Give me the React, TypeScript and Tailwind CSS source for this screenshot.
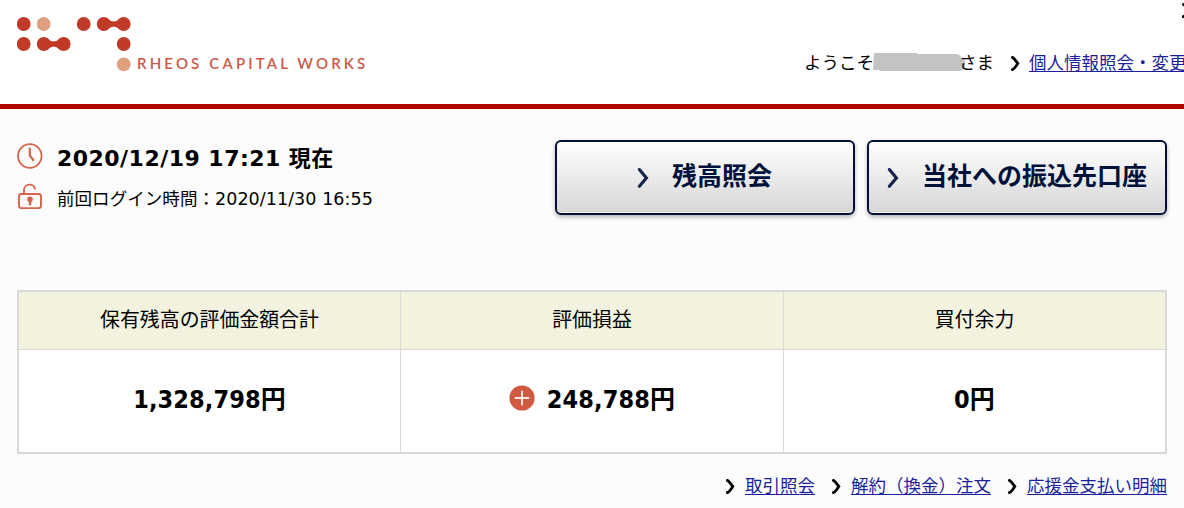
import type { ReactNode } from "react";

type IconProps = {
  className?: string;
};

const summary = [
  { label: "保有残高の評価金額合計", value: "1,328,798", positive: false },
  { label: "評価損益", value: "248,788", positive: true },
  { label: "買付余力", value: "0", positive: false },
];

const footerLinks = ["取引照会", "解約（換金）注文", "応援金支払い明細"];

function Chevron({ className = "" }: IconProps) {
  return (
    <svg
      viewBox="0 0 9 16"
      className={`h-4 w-[9px] shrink-0 ${className}`}
      fill="none"
      stroke="currentColor"
      strokeWidth="2.9"
      strokeLinecap="round"
    >
      <path d="M1.4 2.4Q2.7 2.9 6.8 8.4Q3.8 13.6 1.4 14.6" />
    </svg>
  );
}

function Logo() {
  return (
    <div className="flex items-end">
      <svg viewBox="0 0 115 56" className="h-14 w-[115px] shrink-0">
        <g fill="#c13927">
          <circle cx="6.7" cy="7" r="6.9" />
          <circle cx="66.7" cy="7" r="6.9" />
          <circle cx="86.7" cy="7" r="6.9" />
          <circle cx="106.7" cy="7" r="6.9" />
          <path d="M90 1 Q96.7 8 103.4 1 V13 Q96.7 6 90 13Z" />
          <circle cx="6.7" cy="27" r="6.9" />
          <circle cx="26.7" cy="27" r="6.9" />
          <circle cx="46.7" cy="27" r="6.9" />
          <path d="M30 21 Q36.7 28 43.4 21 V33 Q36.7 26 30 33Z" />
          <circle cx="106.7" cy="27" r="6.9" />
        </g>
        <g fill="#dfa080">
          <circle cx="26.7" cy="7" r="6.9" />
          <circle cx="106.7" cy="47.3" r="6.9" />
        </g>
      </svg>
      <span className="ml-[5px] pb-px font-['Lato'] text-[15px] leading-[18px] font-semibold tracking-[3.15px] whitespace-nowrap text-[#cb5848]">
        RHEOS CAPITAL WORKS
      </span>
    </div>
  );
}

function ClockIcon() {
  return (
    <svg
      viewBox="0 0 26 26"
      className="mb-0.5 h-[26px] w-[26px] shrink-0"
      fill="none"
      stroke="#d6644b"
    >
      <circle cx="12.8" cy="13" r="11.8" strokeWidth="1.8" />
      <path
        d="M12.8 5.5V12.8Q14.5 14.5 16.3 17"
        strokeWidth="2.2"
        strokeLinecap="round"
      />
    </svg>
  );
}

function LockIcon() {
  return (
    <svg
      viewBox="0 0 26 26"
      className="mb-[3px] h-[26px] w-[26px] shrink-0"
      fill="none"
      stroke="#d6644b"
      strokeWidth="1.9"
    >
      <path d="M7 11V7.2a5.6 5.6 0 0 1 11-1.5" strokeLinecap="round" />
      <rect x="2" y="11" width="22" height="14.2" rx="2.4" />
      <circle cx="13" cy="16.3" r="2.8" fill="#d6644b" stroke="none" />
      <path d="M13 17V22.3" strokeWidth="2.4" />
    </svg>
  );
}

function PlusIcon() {
  return (
    <svg viewBox="0 0 26 26" className="mb-1 h-[26px] w-[26px] shrink-0">
      <circle cx="13" cy="13" r="12.6" fill="#d05a41" />
      <path
        d="M13 6.5V19.5M6.5 13H19.5"
        stroke="#fbeae6"
        strokeWidth="1.9"
        strokeLinecap="round"
      />
    </svg>
  );
}

function TextLink({ children }: { children: ReactNode }) {
  return (
    <a
      href="#"
      className="text-[17.5px] leading-6 whitespace-nowrap text-[#1a1f9c] underline decoration-1 underline-offset-2"
    >
      {children}
    </a>
  );
}

function MenuButton({
  children,
  className,
}: {
  children: ReactNode;
  className: string;
}) {
  return (
    <button
      className={`flex h-[75px] w-[300px] items-center rounded-md border-2 border-[#00113a] bg-linear-to-b from-white to-[#d6d6d6] pb-0.5 text-[25px] font-bold whitespace-nowrap text-[#00113a] shadow-[0_2px_4px_rgba(0,0,0,0.3),inset_0_-1px_0_#f2f2f2] ${className}`}
    >
      <svg
        viewBox="0 0 12 22"
        className="mt-[3px] mr-[23px] h-[22px] w-3 shrink-0"
        fill="none"
        stroke="#17254b"
        strokeWidth="3.2"
        strokeLinecap="round"
      >
        <path d="M2.4 2.6L9.4 11L2.4 19.2" />
      </svg>
      {children}
    </button>
  );
}

export default function App() {
  return (
    <div className="h-[508px] w-[1184px] overflow-hidden bg-[#fcfcfc] font-['DejaVu_Sans','Noto_Sans_CJK_JP',sans-serif] text-black">
      <header className="flex h-[109px] justify-between border-b-5 border-[#b00000] bg-white">
        <div className="pt-[17px] pl-[17px]">
          <Logo />
        </div>
        <div className="flex w-[380px] flex-col overflow-hidden">
          <div className="flex h-[51px] pt-[2px] pl-[378px]">
            <Chevron />
          </div>
          <div className="flex h-6 items-center text-[17.5px] leading-6 whitespace-nowrap">
            <span>ようこそ</span>
            <svg
              viewBox="0 0 92 20"
              className="-ml-px h-5 w-[92px] shrink-0"
            >
              <path
                d="M1 0H44V1H84Q88 2 89 6L92 7V14Q90 18 86 18H8L6 17H0Z"
                fill="#c3c3c3"
              />
            </svg>
            <span className="-ml-1.5">さま</span>
            <Chevron className="mr-[9px] ml-[17px]" />
            <TextLink>個人情報照会・変更</TextLink>
          </div>
        </div>
      </header>

      <main className="px-[17px]">
        <section className="flex justify-between pt-[31px]">
          <div>
            <div className="flex h-[34px] items-center">
              <ClockIcon />
              <p className="ml-3.5 pt-[3px] text-[22px] leading-[34px] font-bold tracking-[0.47px] whitespace-nowrap">
                2020/12/19 17:21 現在
              </p>
            </div>
            <div className="mt-1.5 flex h-[34px] items-center">
              <LockIcon />
              <p className="ml-3.5 pt-1 text-[17.5px] tracking-[0.06px] whitespace-nowrap">
                前回ログイン時間：2020/11/30 16:55
              </p>
            </div>
          </div>
          <div className="flex gap-3">
            <MenuButton className="pl-20">残高照会</MenuButton>
            <MenuButton className="pl-[18px]">当社への振込先口座</MenuButton>
          </div>
        </section>

        <section className="mt-[75px] grid h-[164px] grid-cols-[382px_383px_1fr] divide-x divide-[#d9d9d9] border-2 border-[#d9d9d9] bg-white">
          {summary.map((item) => (
            <div key={item.label} className="flex flex-col">
              <div className="flex h-[58px] items-center justify-center border-b border-[#d9d9d9] bg-[#f3f2df] pt-px text-[19.9px]">
                {item.label}
              </div>
              <div className="flex flex-1 items-center justify-center pb-[3px] font-['DejaVu_Sans_Condensed','Noto_Sans_CJK_JP',sans-serif] text-[25px] font-bold tracking-[0.1px]">
                {item.positive && (
                  <span className="mr-3">
                    <PlusIcon />
                  </span>
                )}
                {item.value}円
              </div>
            </div>
          ))}
        </section>

        <nav className="mt-5 flex justify-end gap-[17px]">
          {footerLinks.map((label) => (
            <div key={label} className="flex items-center gap-2.5">
              <Chevron />
              <TextLink>{label}</TextLink>
            </div>
          ))}
        </nav>
      </main>
    </div>
  );
}
